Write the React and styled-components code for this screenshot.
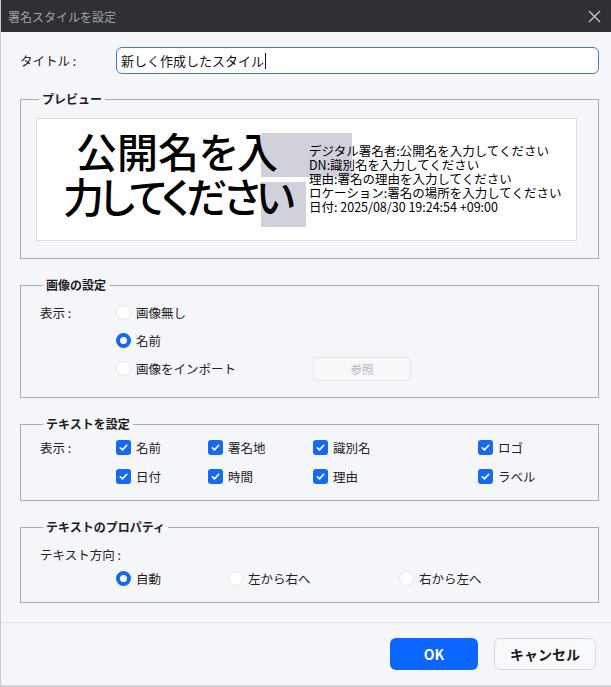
import React from 'react'
import styled, { createGlobalStyle } from 'styled-components'

const GlobalStyle = createGlobalStyle`
  html, body {
    margin: 0;
    padding: 0;
    background: #f4f6f9;
  }
  body {
    font-family: "Noto Sans CJK JP", "Noto Sans", sans-serif;
    color: #1c1c1c;
  }
`

const Window = styled.div`
  width: 611px;
  height: 687px;
  box-sizing: border-box;
  display: flex;
  flex-direction: column;
  background: #f4f6f9;
  border-left: 1px solid #c9cbd0;
  border-bottom: 2px solid #d4d6da;
`

const TitleBar = styled.div`
  height: 32px;
  flex-shrink: 0;
  display: flex;
  align-items: center;
  justify-content: space-between;
  padding: 0 10px 0 7px;
  background: #2e3034;
  color: #9fa2a8;
  font-size: 12px;
`

const Body = styled.div`
  display: flex;
  flex-direction: column;
  gap: 18px;
  padding: 15px 12px 0 19px;
`

const TitleRow = styled.div`
  display: flex;
  align-items: center;
  margin-bottom: -1px;
`

const FieldLabel = styled.div`
  width: ${(p) => p.$width || 76}px;
  flex-shrink: 0;
  font-size: 12.5px;
  color: #222;
  white-space: nowrap;
`

const TextInput = styled.div`
  flex: 1;
  height: 27px;
  box-sizing: border-box;
  border: 1px solid #3d7bd6;
  border-radius: 6px;
  background: #fff;
  display: flex;
  align-items: center;
  padding: 0 4px;
  font-size: 13px;
  color: #111;
`

const Caret = styled.span`
  display: inline-block;
  width: 1px;
  height: 16px;
  background: #111;
  margin-left: 1px;
`

const Group = styled.fieldset`
  margin: 0;
  min-width: 0;
  border: 1px solid #abadb3;
  padding: ${(p) => p.$pad};
  display: flex;
  flex-direction: column;
`

const Legend = styled.legend`
  padding: 0 3px;
  margin-left: 3px;
  font-size: 12px;
  font-weight: 700;
  line-height: 16px;
  color: #1c1c1c;
`

const Preview = styled.div`
  position: relative;
  height: 123px;
  box-sizing: border-box;
  background: #fff;
  border: 1px solid #dcdfe5;
  display: flex;
  align-items: flex-start;
  overflow: hidden;
`

const Highlight = styled.div`
  position: absolute;
  background: #d1d1dc;
`

const BigName = styled.div`
  position: relative;
  width: 264px;
  padding: 9px 0 0 8px;
  text-align: center;
  font-size: 41px;
  font-weight: 500;
  line-height: 45px;
  color: #000;
  font-feature-settings: "palt";
  white-space: nowrap;
`

const BigLine = styled.div`
  letter-spacing: ${(p) => p.$spacing || 0}px;
`

const InfoLines = styled.div`
  position: relative;
  margin-top: 25px;
  font-size: 12.5px;
  line-height: 14px;
  color: #000;
  white-space: nowrap;
`

const Row = styled.div`
  display: flex;
  align-items: center;
  height: ${(p) => p.$h || 28}px;
`

const Option = styled.label`
  display: flex;
  align-items: center;
  gap: 5px;
  width: ${(p) => (p.$width ? `${p.$width}px` : 'auto')};
  flex-shrink: 0;
  font-size: 12.5px;
  color: #222;
`

const Radio = styled.span`
  width: 15px;
  height: 15px;
  box-sizing: border-box;
  border-radius: 50%;
  background: #fff;
  border: ${(p) => (p.$on ? '4px solid #1467ef' : '1px solid #e4e6ea')};
`

const Box = styled.span`
  width: 15px;
  height: 15px;
  border-radius: 3px;
  background: #1769ef;
  display: flex;
  align-items: center;
  justify-content: center;
`

const BrowseButton = styled.button`
  width: 98px;
  height: 24px;
  border: 1px solid #e6e7ea;
  border-radius: 4px;
  background: #f7f8fa;
  color: #b4b6ba;
  font-family: inherit;
  font-size: 11.5px;
  padding: 0;
`

const Divider = styled.div`
  height: 1px;
  background: #dfe1e6;
  margin-top: 19px;
`

const Footer = styled.div`
  display: flex;
  justify-content: flex-end;
  gap: 16px;
  padding: 15px 15px 0 0;
`

const Button = styled.button`
  height: 32px;
  width: ${(p) => p.$width}px;
  box-sizing: border-box;
  border-radius: 6px;
  font-family: "Noto Sans CJK JP", "Noto Sans", sans-serif;
  font-size: 14px;
  font-weight: 700;
  padding: 0;
  cursor: pointer;
  border: ${(p) => (p.$primary ? 'none' : '1px solid #d9dbe0')};
  background: ${(p) => (p.$primary ? '#0a66ff' : '#f8f9fb')};
  color: ${(p) => (p.$primary ? '#fff' : '#1a1a1a')};
`

const Check = () => (
  <Box>
    <svg width="11" height="11" viewBox="0 0 12 12">
      <path d="M2.5 6.3l2.4 2.3 4.6-5" fill="none" stroke="#fff" strokeWidth="1.8" strokeLinecap="round" strokeLinejoin="round" />
    </svg>
  </Box>
)

const CheckOption = ({ label, width }) => (
  <Option $width={width}>
    <Check />
    {label}
  </Option>
)

const RadioOption = ({ label, on, width }) => (
  <Option $width={width}>
    <Radio $on={on} />
    {label}
  </Option>
)

const CloseIcon = () => (
  <svg width="13" height="13" viewBox="0 0 13 13">
    <path d="M1 1l11 11M12 1L1 12" stroke="#c9cbcf" strokeWidth="1.2" />
  </svg>
)

const App = () => {
  return (
    <Window>
      <GlobalStyle />
      <TitleBar>
        <span>署名スタイルを設定</span>
        <CloseIcon />
      </TitleBar>
      <Body>
        <TitleRow>
          <FieldLabel $width={96}>タイトル :</FieldLabel>
          <TextInput>
            新しく作成したスタイル
            <Caret />
          </TextInput>
        </TitleRow>

        <Group $pad="11px 21px 17px 15px">
          <Legend>プレビュー</Legend>
          <Preview>
            <Highlight style={{ left: 224, top: 14, width: 91, height: 44 }} />
            <Highlight style={{ left: 224, top: 63, width: 45, height: 45 }} />
            <BigName>
              <BigLine>公開名を入</BigLine>
              <BigLine $spacing={-4}>力してください</BigLine>
            </BigName>
            <InfoLines>
              <div>デジタル署名者:公開名を入力してください</div>
              <div>DN:識別名を入力してください</div>
              <div>理由:署名の理由を入力してください</div>
              <div>ロケーション:署名の場所を入力してください</div>
              <div>日付: 2025/08/30 19:24:54 +09:00</div>
            </InfoLines>
          </Preview>
        </Group>

        <Group $pad="5px 12px 14px 19px">
          <Legend>画像の設定</Legend>
          <Row>
            <FieldLabel>表示 :</FieldLabel>
            <RadioOption label="画像無し" />
          </Row>
          <Row>
            <FieldLabel />
            <RadioOption label="名前" on />
          </Row>
          <Row $h={29}>
            <FieldLabel />
            <RadioOption label="画像をインポート" width={197} />
            <BrowseButton>参照</BrowseButton>
          </Row>
        </Group>

        <Group $pad="1px 12px 9px 19px">
          <Legend>テキストを設定</Legend>
          <Row $h={29}>
            <FieldLabel>表示 :</FieldLabel>
            <CheckOption label="名前" width={92} />
            <CheckOption label="署名地" width={105} />
            <CheckOption label="識別名" width={165} />
            <CheckOption label="ロゴ" />
          </Row>
          <Row $h={29}>
            <FieldLabel />
            <CheckOption label="日付" width={92} />
            <CheckOption label="時間" width={105} />
            <CheckOption label="理由" width={165} />
            <CheckOption label="ラベル" />
          </Row>
        </Group>

        <Group $pad="7px 12px 12px 19px">
          <Legend>テキストのプロパティ</Legend>
          <Row $h={24}>
            <FieldLabel>テキスト方向 :</FieldLabel>
          </Row>
          <Row $h={24}>
            <FieldLabel />
            <RadioOption label="自動" on width={112} />
            <RadioOption label="左から右へ" width={171} />
            <RadioOption label="右から左へ" />
          </Row>
        </Group>
      </Body>
      <Divider />
      <Footer>
        <Button $primary $width={88}>OK</Button>
        <Button $width={102}>キャンセル</Button>
      </Footer>
    </Window>
  )
}

export default App
